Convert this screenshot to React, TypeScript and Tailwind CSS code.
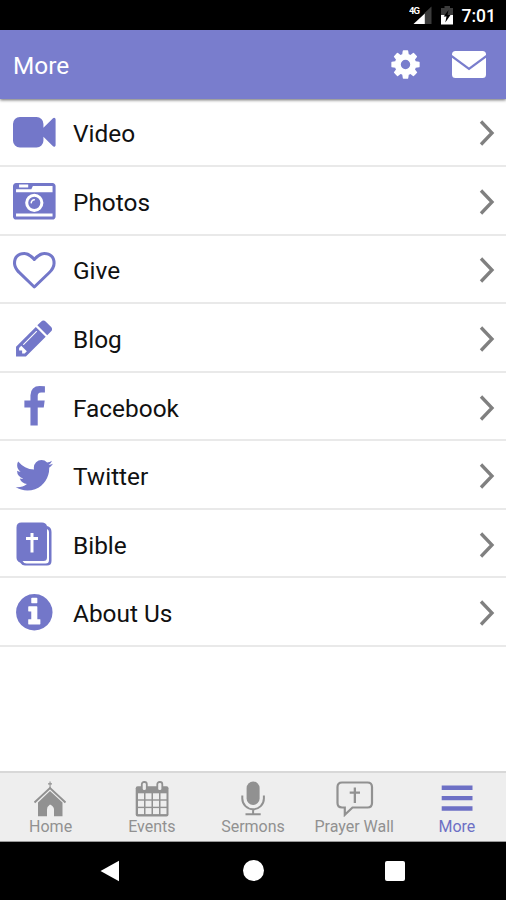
import React from 'react'

const PATHS = {
  video:
    'M1792 352v1088q0 42-39 59-13 5-25 5-27 0-45-19l-403-403v166q0 119-84.5 203.5t-203.5 84.5h-704q-119 0-203.5-84.5t-84.5-203.5v-704q0-119 84.5-203.5t203.5-84.5h704q119 0 203.5 84.5t84.5 203.5v165l403-402q18-19 45-19 12 0 25 5 39 17 39 59z',
  photos:
    'M928 832q0-14-9-23t-23-9q-66 0-113 47t-47 113q0 14 9 23t23 9 23-9 9-23q0-40 28-68t68-28q14 0 23-9t9-23zm224 130q0 106-75 181t-181 75-181-75-75-181 75-181 181-75 181 75 75 181zm-1024 574h1536v-128h-1536v128zm1152-574q0-159-112.5-271.5t-271.5-112.5-271.5 112.5-112.5 271.5 112.5 271.5 271.5 112.5 271.5-112.5 112.5-271.5zm-1024-642h384v-128h-384v128zm-128 192h1536v-256h-828l-64 128h-644v128zm1664-256v1280q0 53-37.5 90.5t-90.5 37.5h-1536q-53 0-90.5-37.5t-37.5-90.5v-1280q0-53 37.5-90.5t90.5-37.5h1536q53 0 90.5 37.5t37.5 90.5z',
  give: 'M1664 596q0-81-21.5-143t-55-98.5-81.5-59.5-94-31-98-8-112 25.5-110.5 64-86.5 72-60 61.5q-18 22-49 22t-49-22q-24-28-60-61.5t-86.5-72-110.5-64-112-25.5-98 8-94 31-81.5 59.5-55 98.5-21.5 143q0 168 187 355l581 560 580-559q188-188 188-356zm128 0q0 221-229 450l-623 600q-18 18-44 18t-44-18l-624-602q-10-8-27.5-26t-55.5-65.5-68-97.5-53.5-121-23.5-138q0-220 127-344t351-124q62 0 126.5 21.5t120 58 95.5 68.5 76 68q36-36 76-68t95.5-68.5 120-58 126.5-21.5q224 0 351 124t127 344z',
  blog: 'M491 1536l91-91-235-235-91 91v107h128v128h107zm523-928q0-22-22-22-10 0-17 7l-542 542q-7 7-7 17 0 22 22 22 10 0 17-7l542-542q7-7 7-17zm-54-192l416 416-832 832h-416v-416zm683 96q0 53-37 90l-166 166-416-416 166-165q36-38 90-38 53 0 91 38l235 234q37 39 37 91z',
  facebook:
    'M1343 12v264h-157q-86 0-116 36t-30 108v189h293l-39 296h-254v759h-306v-759h-255v-296h255v-218q0-186 104-288.5t277-102.5q147 0 228 12z',
  twitter:
    'M1684 408q-67 98-162 167 1 14 1 42 0 130-38 259.5t-115.5 248.5-184.5 210.5-258 146-323 54.5q-271 0-496-145 35 4 78 4 225 0 401-138-105-2-188-64.5t-114-159.5q33 5 61 5 43 0 85-11-112-23-185.5-111.5t-73.5-205.5v-4q68 38 146 41-66-44-105-115t-39-154q0-88 44-163 121 149 294.5 238.5t371.5 99.5q-8-38-8-74 0-134 94.5-228.5t228.5-94.5q140 0 236 102 109-21 205-78-37 115-142 178 93-10 186-50z',
  about:
    'M1152 1376v-160q0-14-9-23t-23-9h-96v-512q0-14-9-23t-23-9h-320q-14 0-23 9t-9 23v160q0 14 9 23t23 9h96v320h-96q-14 0-23 9t-9 23v160q0 14 9 23t23 9h448q14 0 23-9t9-23zm-128-896v-160q0-14-9-23t-23-9h-192q-14 0-23 9t-9 23v160q0 14 9 23t23 9h192q14 0 23-9t9-23zm640 416q0 209-103 385.5t-279.5 279.5-385.5 103-385.5-103-279.5-279.5-103-385.5 103-385.5 279.5-279.5 385.5-103 385.5 103 279.5 279.5 103 385.5z',
  cog: 'M1152 896q0-106-75-181t-181-75-181 75-75 181 75 181 181 75 181-75 75-181zm512-109v222q0 12-8 23t-20 13l-185 28q-19 54-39 91 35 50 107 138 10 12 10 25t-9 23q-27 37-99 108t-94 71q-12 0-26-9l-138-108q-44 23-91 38-16 136-29 186-7 28-36 28h-222q-14 0-24.5-8.5t-11.5-21.5l-28-184q-49-16-90-37l-141 107q-10 9-25 9-14 0-25-11-126-114-165-168-7-10-7-23 0-12 8-23 15-21 51-66.5t54-70.5q-27-50-41-99l-183-27q-13-2-21-12.5t-8-23.5v-222q0-12 8-23t19-13l186-28q14-46 39-92-40-57-107-138-10-12-10-24 0-10 9-23 26-36 98.5-107.5t94.5-71.5q13 0 26 10l138 107q44-23 91-38 16-136 29-186 7-28 36-28h222q14 0 24.5 8.5t11.5 21.5l28 184q49 16 90 37l142-107q9-9 24-9 13 0 25 10 129 119 165 170 7 8 7 22 0 12-8 23-15 21-51 66.5t-54 70.5q26 50 41 98l183 28q13 2 21 12.5t8 23.5z',
}

function Glyph({ d, className }: { d: string; className: string }) {
  return (
    <svg viewBox="0 0 1792 1792" fill="currentColor" className={className}>
      <path d={d} />
    </svg>
  )
}

function RowGlyph({ d }: { d: string }) {
  return <Glyph d={d} className="size-[42.6px] shrink-0 overflow-visible" />
}

function BibleIcon() {
  return (
    <svg viewBox="0 0 36 44" className="h-11 w-9">
      <path d="M5.500.5H26q4 0 5 3.500 4.500 1 4.500 6V39q0 4.500-4.500 4.500H9Q6 43.500 4 40.500.5 39 .5 35.500v-30q0-5 5-5z" fill="currentColor" />
      <path d="M31 7v28.500q0 3.500-3.500 3.500H6.500q1.500 2.500 4 2.500h19q3.500 0 3.500-3.500V10q0-2-2-3z" fill="#fff" />
      <path d="M14.500 11h3v4H22v3h-4.500v12.500h-3V18H10v-3h4.500z" fill="#fff" />
    </svg>
  )
}

function HomeIcon() {
  return (
    <svg viewBox="0 0 34 36" className="mr-[2px] h-9 w-[34px]">
      <path d="M16.500.5h1.100v1.800H19v1.100h-1.400V8h-1.100V3.400H15V2.300h1.500z" fill="currentColor" />
      <path d="M1.500 21.500 17 7 32.500 21.500" fill="none" stroke="currentColor" strokeWidth="2" />
      <path d="M17 10 29.500 21.500v13.700H21V28.500q0-3-4-5-3 2-3 5v6.700H5V21.500z" fill="currentColor" />
    </svg>
  )
}

function EventsIcon() {
  return (
    <svg viewBox="0 0 34 36" className="h-9 w-[34px]">
      <rect x=".7" y="5.200" width="32.800" height="30.300" rx="2" fill="currentColor" />
      {[3, 10.5, 18, 25.5].map((x) =>
        [12.3, 19.7, 27.1].map((y) => <rect key={`${x}-${y}`} x={x} y={y} width="6" height="6" fill="#eee" />)
      )}
      <rect x="6.800" y="1" width="5" height="9" rx="2.300" fill="#eee" stroke="currentColor" strokeWidth="1.800" />
      <rect x="22.300" y="1" width="5" height="9" rx="2.300" fill="#eee" stroke="currentColor" strokeWidth="1.800" />
    </svg>
  )
}

function SermonsIcon() {
  return (
    <svg viewBox="0 0 34 36" className="h-9 w-[34px]">
      <rect x="10.600" y=".5" width="13" height="23.500" rx="6.500" fill="currentColor" />
      <path d="M6.300 14.500v3a10.800 10.800 0 0 0 21.600 0v-3M17.100 28v5M9.500 33.300h15.200" fill="none" stroke="currentColor" strokeWidth="2" />
    </svg>
  )
}

function PrayerIcon() {
  return (
    <svg viewBox="0 0 38 36" className="ml-[2px] h-9 w-[38px]">
      <path
        d="M6 1.500h25.500q4.500 0 4.500 4.500v16q0 4.500-4.500 4.500H16.500L8.800 33.800V26.500H6q-4.500 0-4.500-4.500V6Q1.500 1.500 6 1.500z"
        fill="none"
        stroke="currentColor"
        strokeWidth="2.200"
      />
      <path d="M17.700 6.500h2.300v4h4v2.200h-4v9.300h-2.300v-9.300h-4v-2.200h4z" fill="currentColor" />
    </svg>
  )
}

function MenuIcon() {
  return (
    <svg viewBox="0 0 32 36" className="ml-[3px] h-9 w-8">
      <path d="M.7 6.700h30.800M.7 17.100h30.800M.7 27.500h30.800" stroke="currentColor" strokeWidth="4.400" />
    </svg>
  )
}

const rows = [
  { label: 'Video', icon: <RowGlyph d={PATHS.video} /> },
  { label: 'Photos', icon: <RowGlyph d={PATHS.photos} /> },
  { label: 'Give', icon: <RowGlyph d={PATHS.give} /> },
  { label: 'Blog', icon: <RowGlyph d={PATHS.blog} /> },
  { label: 'Facebook', icon: <RowGlyph d={PATHS.facebook} /> },
  { label: 'Twitter', icon: <RowGlyph d={PATHS.twitter} /> },
  { label: 'Bible', icon: <BibleIcon /> },
  { label: 'About Us', icon: <RowGlyph d={PATHS.about} /> },
]

const tabs = [
  { label: 'Home', icon: <HomeIcon /> },
  { label: 'Events', icon: <EventsIcon /> },
  { label: 'Sermons', icon: <SermonsIcon /> },
  { label: 'Prayer Wall', icon: <PrayerIcon /> },
  { label: 'More', icon: <MenuIcon />, active: true },
]

function StatusBar() {
  return (
    <div className="flex h-[30px] shrink-0 items-center justify-end bg-black pr-[10px] text-white">
      <svg viewBox="0 0 46 22" className="mr-[7px] h-[22px] w-[46px]">
        <text x="0" y="9.500" fontSize="9.500" fontWeight="700" letterSpacing="-1" fill="#fff" fontFamily="Roboto, sans-serif">
          4G
        </text>
        <path d="M22.500 2.500V20H15.500V9z" fill="#3c3c3c" />
        <path d="M15.800 9.500V20H4.500z" fill="#fff" />
        <path d="M35.500 2h5.500v2h3v7H32V4h3.500z" fill="#3c3c3c" />
        <path d="M32 11h12v9.500H32z" fill="#fff" />
        <path d="M39.500 6l-4.800 6.500h2.800l-1.200 6 5.200-7.500h-3z" fill="#000" />
      </svg>
      <span className="pt-[2px] text-[17.5px] leading-[28px] font-medium">7:01</span>
    </div>
  )
}

function Header() {
  return (
    <header className="relative z-10 flex h-[69px] shrink-0 items-center bg-[#797dcd] pr-5 pl-[13px] text-white shadow-[0_1px_3px_rgba(0,0,0,0.6)]">
      <h1 className="flex-1 pt-[3px] text-[24.4px] leading-[30px]">More</h1>
      <Glyph d={PATHS.cog} className="mr-[30px] size-[33px]" />
      <svg viewBox="0 0 34 27" className="h-[27px] w-[34px]">
        <path d="M3.500 0h27Q34 0 34 3.500V4L17 16.500 0 4v-.5Q0 0 3.500 0z" fill="#fff" />
        <path d="M0 6.700 17 19.300 34 6.700v16.800q0 3.500-3.500 3.500h-27Q0 27 0 23.500z" fill="#fff" />
      </svg>
    </header>
  )
}

export default function App() {
  return (
    <div className="flex h-[900px] w-[506px] flex-col overflow-hidden bg-white font-[Roboto,sans-serif]">
      <StatusBar />
      <Header />
      <main className="-mt-px flex-1 pt-[0.5px]">
        {rows.map((row) => (
          <div key={row.label} className="flex h-[68.57px] items-center border-b-2 border-[#e9e9e9] pr-[11px] pl-3">
            <div className="flex w-11 justify-center pt-[2px] text-[#7377c9]">{row.icon}</div>
            <span className="ml-[17px] flex-1 pt-[5px] text-[24.4px] leading-[30px] text-[#111]">{row.label}</span>
            <svg viewBox="0 0 16 28" className="mt-[3px] h-7 w-4">
              <path d="M2 2.500 13 14 2 25.500" fill="none" stroke="#808080" strokeWidth="3.300" />
            </svg>
          </div>
        ))}
      </main>
      <nav className="flex h-[71px] shrink-0 border-t-2 border-b border-t-[#d8d8d8] border-b-[#999] bg-[#eee]">
        {tabs.map((tab) => (
          <div
            key={tab.label}
            className={`flex flex-1 flex-col items-center pt-2 ${tab.active ? 'text-[#6d70c5]' : 'text-[#919191]'}`}
          >
            {tab.icon}
            <span className={`text-[16px] leading-[20px] whitespace-nowrap ${tab.active ? 'pl-[3px]' : ''}`}>
              {tab.label}
            </span>
          </div>
        ))}
      </nav>
      <div className="flex h-[58px] shrink-0 items-center justify-center gap-[121.5px] bg-black pr-[2px] pb-px">
        <svg viewBox="0 0 22 22" className="size-[22px]">
          <path d="M20 .7v20.600L1.500 11z" fill="#fff" />
        </svg>
        <div className="size-[21px] rounded-full bg-white" />
        <div className="size-5 rounded-[2px] bg-white" />
      </div>
    </div>
  )
}
